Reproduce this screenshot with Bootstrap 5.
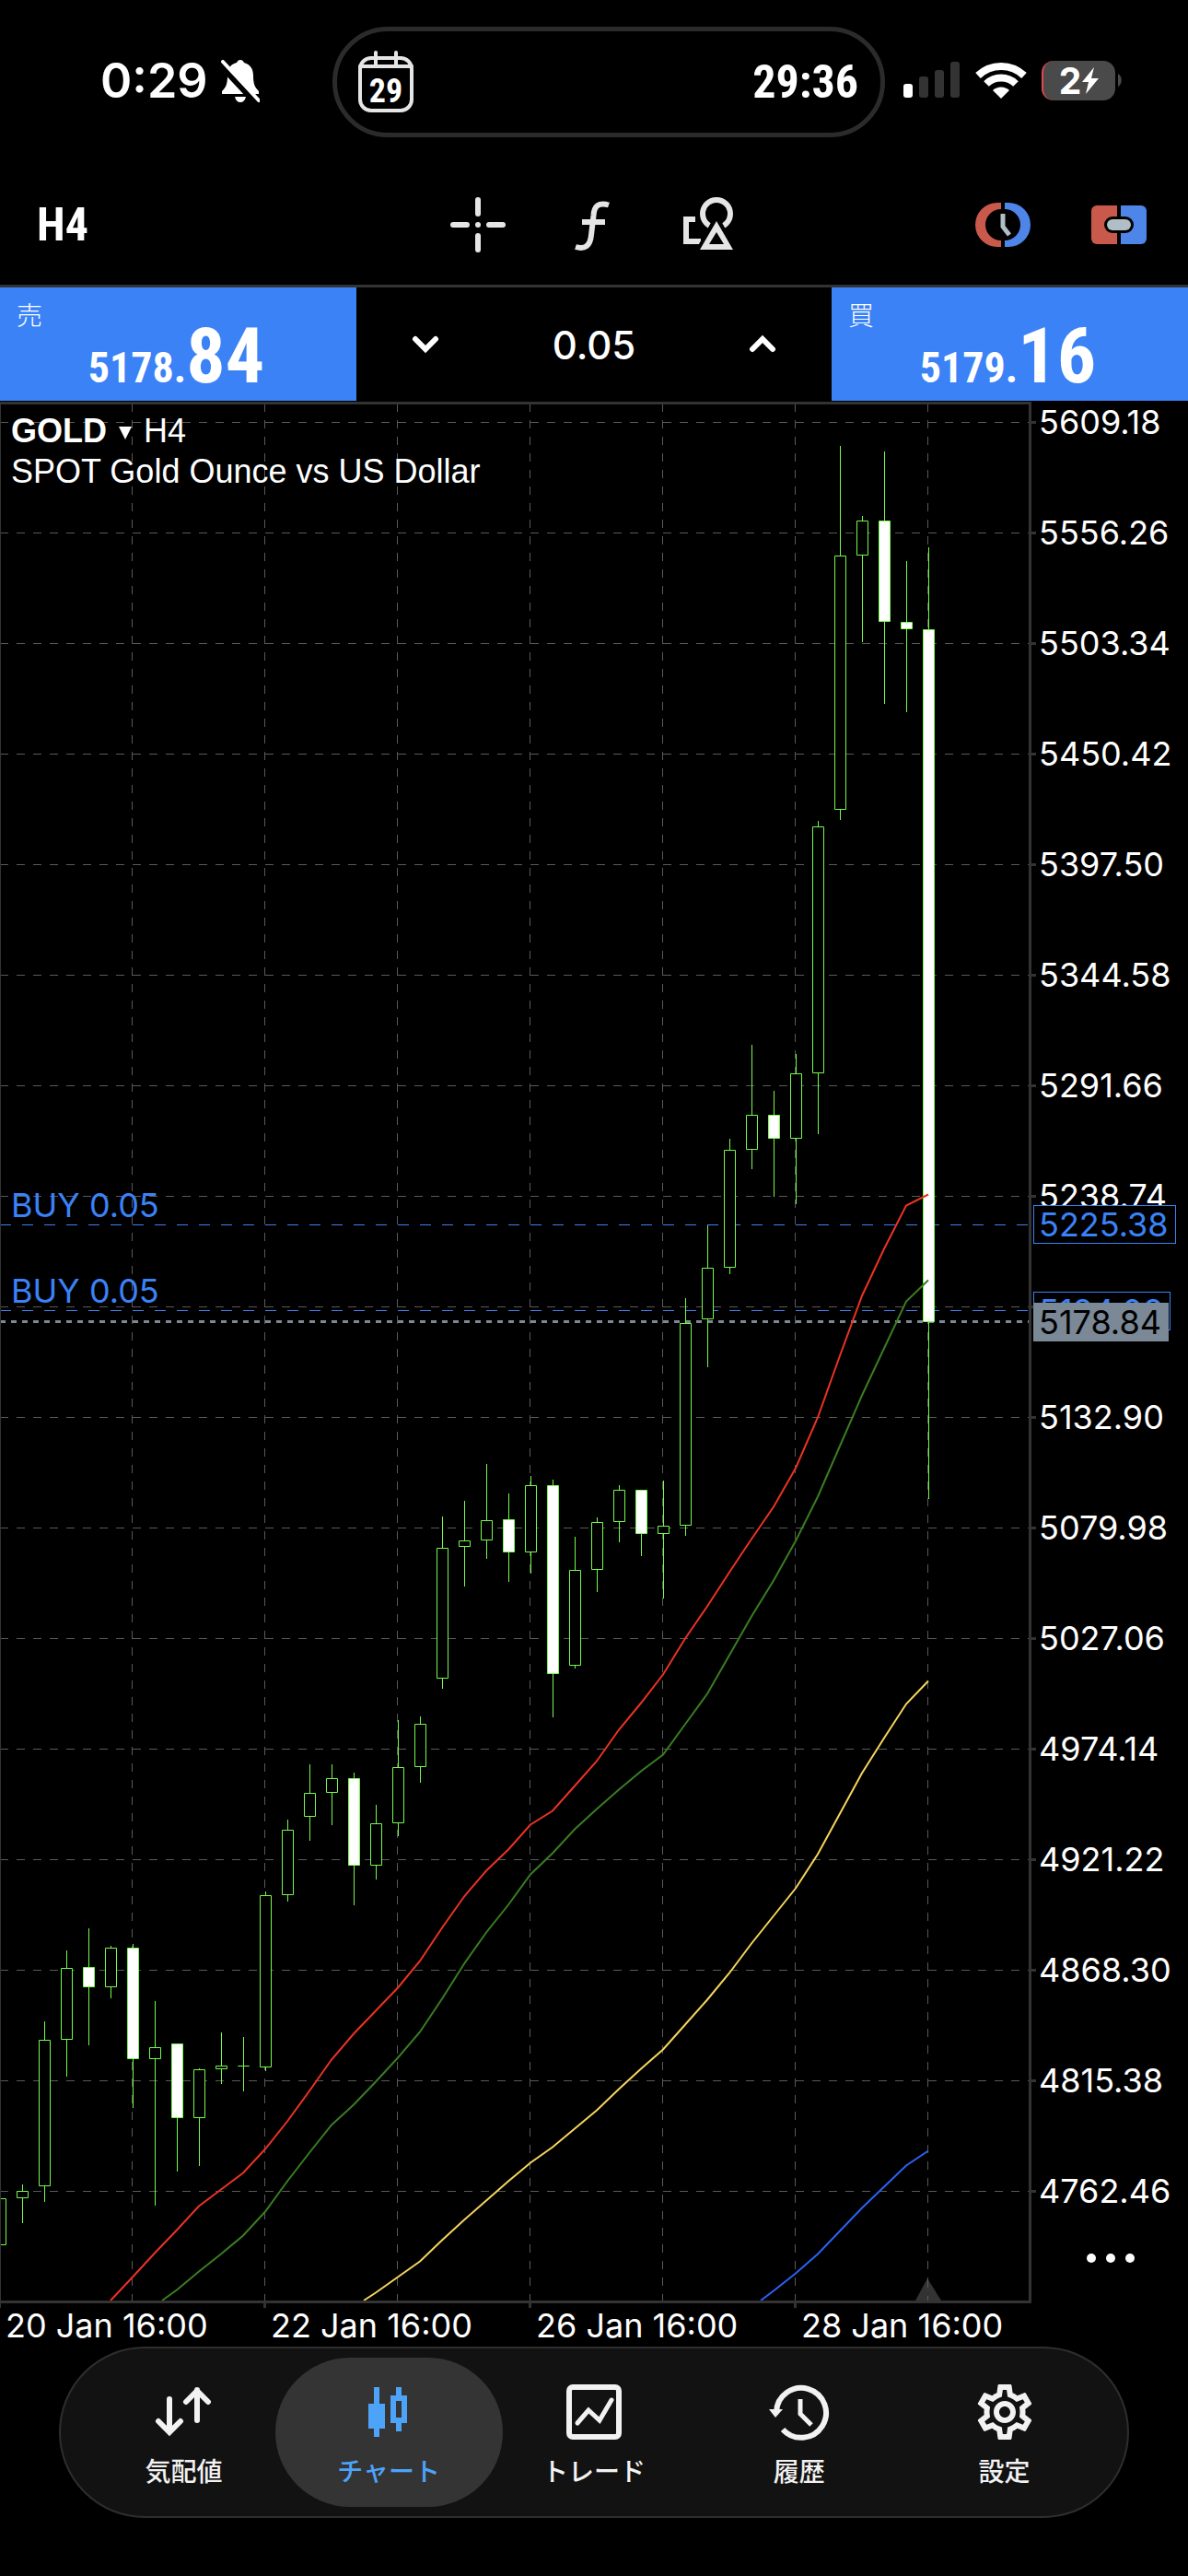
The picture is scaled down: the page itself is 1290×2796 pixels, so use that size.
<!DOCTYPE html>
<html lang="ja">
<head>
<meta charset="utf-8">
<meta name="viewport" content="width=device-width, initial-scale=1">
<title>GOLD H4</title>
<link rel="stylesheet" href="https://cdn.jsdelivr.net/npm/bootstrap@5.3.0/dist/css/bootstrap.min.css">
<style>
  :root { --line: #333; --buy: #3b82f7; --din: "Liberation Sans Narrow", "Roboto Condensed", "Noto Sans CJK JP", sans-serif; }
  body { background: #000; color: #fff; font-family: Inter, "Noto Sans CJK JP", sans-serif; }
  svg { display: block; flex: none; }
  button, .btn { color: inherit; }
  .icon-btn { background: none; border: 0; padding: 0; line-height: 1; }
  .status-bar { height: 178px; padding: 29px 71px 0 109px; }
  .status-time { font-size: 52px; font-weight: 600; line-height: 60px; width: 131px; }
  .island { width: 600px; height: 120px; border: 5px solid #2b2b2b; border-radius: 60px; padding: 0 24px 0 22px; margin-left: 79px; }
  .island-time { font: 700 50px/60px var(--din); }
  .status-left { height: 118px; }
  .status-right { height: 116px; gap: 16px; }
  .battery { width: 80px; height: 43px; border-radius: 13px; background: #4a4a4a; border-left: 2px solid #e5484d; font-size: 39px; font-weight: 700; line-height: 43px; }
  .toolbar-row { height: 134px; padding: 0 44px 0 40px; border-bottom: 3px solid var(--line); }
  .tf { font: 700 50px/60px var(--din); width: 448px; }
  .quote { width: 30%; background: var(--buy); color: #fff; border: 0; height: 123px; padding: 5px 22px 0 18px; text-align: left; }
  .quote-name { font: 300 28px/36px "Noto Sans CJK JP", sans-serif; display: block; }
  .quote-price { display: block; font: 700 46px/60px var(--din); text-align: center; margin-top: -2px; }
  .quote-price b { font-size: 84px; font-weight: 700; }
  .trade-row { height: 124px; }
  .volume { background: none; border: 0; color: #fff; width: 120px; text-align: center; font-size: 42px; font-weight: 500; padding: 0; }
  .plot { min-width: 0; }
  .plot svg { width: 100%; height: 2070px; }
  .axis-text { font-size: 36px; line-height: 40px; white-space: nowrap; }
  .chart-title { position: absolute; left: 12px; top: 10px; font: 36px/44px "Liberation Sans", sans-serif; }
  .tri { width: 0; height: 0; border: 7px solid transparent; border-top: 14px solid #fff; border-bottom: 0; margin: 4px 13px 0; }
  .order-label { position: absolute; left: 12px; color: var(--buy); }
  .axis { width: 164px; padding-top: 2px; }
  .axis-label { height: 40px; margin-bottom: 80px; padding-left: 2px; }
  .tag { position: absolute; left: -4px; height: 42px; padding: 0 7px 0 5px; border: 1px solid var(--buy); background: #000; color: var(--buy); }
  .tag-now { background: #7b8896; border-color: #7b8896; color: #000; }
  .more { position: absolute; right: 57px; bottom: 49px; }
  .dates { margin-top: -2px; padding-left: 6px; height: 43px; }
  .dates span { width: 288px; }
  .tabbar { margin: 0 64px; height: 186px; border: 2px solid #2e2e2e; border-radius: 93px; background: #121212; padding: 0 22px; }
  .tab-item { flex: 1 1 0; margin: 0 -12px; height: 162px; border-radius: 81px; color: #f2f2f2; text-decoration: none; padding-top: 28px; font: 500 28px/40px "Noto Sans CJK JP", sans-serif; gap: 12px; }
  .tab-item.active { background: #343434; color: #4da3f8; }
</style>
</head>
<body>
<header>
  <div class="status-bar d-flex">
    <div class="status-left d-flex align-items-center flex-shrink-0">
      <span class="status-time">0:29</span>
      <svg width="42" height="46" viewBox="0 0 42 46"><path d="M21 0c2 0 3 1 4 3 7 2 10 7 10 14 0 10 2 13 6 17v3H1v-3c4-4 6-7 6-17C7 10 10 5 17 3c1-2 2-3 4-3zM15 40h12c-1 4-3 6-6 6s-5-2-6-6z" fill="#fff"/><path d="M0 5 38 46" stroke="#000" stroke-width="8"/><path d="M2 2 41 44" stroke="#fff" stroke-width="4" stroke-linecap="round"/></svg>
    </div>
    <div class="island d-flex align-items-center justify-content-between flex-shrink-0">
      <svg width="62" height="68" viewBox="0 0 62 68"><g fill="none" stroke="#e5e5e5" stroke-width="4"><rect x="3" y="8" width="56" height="57" rx="12"/><path d="M3 17H59M20 2V16M42 2V16" stroke-linecap="round"/></g><text x="31" y="56" text-anchor="middle" font-family="Liberation Sans Narrow, Roboto Condensed, Noto Sans CJK JP, sans-serif" font-size="36" font-weight="700" fill="#fff">29</text></svg>
      <span class="island-time">29:36</span>
    </div>
    <div class="status-right d-flex align-items-center flex-grow-1 ps-3 ms-1">
      <svg width="62" height="40" viewBox="0 0 62 40"><rect x="0" y="24" width="10" height="15" rx="3" fill="#fff"/><g fill="#333"><rect x="17" y="16" width="10" height="23" rx="3"/><rect x="34" y="9" width="10" height="30" rx="3"/><rect x="51" y="0" width="10" height="39" rx="3"/></g></svg>
      <svg width="56" height="40" viewBox="0 0 56 40"><g fill="none" stroke="#fff" stroke-width="8"><path d="M3 15a36 36 0 0 1 50 0"/><path d="M12 24a23 23 0 0 1 32 0"/></g><path d="M28 40 19 31a13 13 0 0 1 18 0z" fill="#fff"/></svg>
      <div class="d-flex align-items-center">
        <div class="battery d-flex align-items-center justify-content-center">2<svg width="20" height="29" viewBox="0 0 20 29"><path d="M14 0 1 16h7L5 29 19 12h-8z" fill="#fff"/></svg></div>
        <svg width="8" height="14" viewBox="0 0 8 14"><path d="M3 0c5 3 5 11 0 14z" fill="#4a4a4a"/></svg>
      </div>
    </div>
  </div>
  <div class="toolbar-row d-flex align-items-center">
    <button class="icon-btn tf text-start">H4</button>
    <button class="icon-btn" aria-label="crosshair"><svg width="62" height="62" viewBox="488 212 62 62"><path d="M492 243H507M531 243H546M519 216V231M519 255V270" stroke="#e5e5e5" stroke-width="6" stroke-linecap="round"/><circle cx="519" cy="243" r="3" fill="#e5e5e5"/></svg></button>
    <button class="icon-btn ms-5" aria-label="indicators"><svg width="84" height="62" viewBox="599 212 84 62"><path d="M662 221.500C651 218 646 223 645.500 233L643 254C642 266 636 270 626 267M633 240H658" stroke="#e5e5e5" stroke-width="6" fill="none"/></svg></button>
    <button class="icon-btn ms-5" aria-label="objects"><svg width="84" height="62" viewBox="730 212 84 62"><g fill="none" stroke="#e5e5e5" stroke-width="6"><path d="M755 237H745V261H761"/><circle cx="778" cy="231" r="15"/></g><path d="M778 233 755 274H801z" stroke="#000" stroke-width="3"/><path fill-rule="evenodd" d="M778 239 760 270H796zM778 251 770 264H786z" fill="#e5e5e5"/></svg></button>
    <span class="flex-grow-1"></span>
    <button class="icon-btn me-5" aria-label="history order"><svg width="62" height="62" viewBox="1061 212 62 62"><path d="M1090 219H1086A24 24 0 0 0 1086 267H1090V260A17 17 0 0 1 1090 226z" fill="#c9594a"/><path d="M1094 219H1098A24 24 0 0 1 1098 267H1094V260A17 17 0 0 0 1094 226z" fill="#4d86e8"/><path d="M1092 231V245L1099 254" fill="none" stroke="#b0bec5" stroke-width="5"/></svg></button>
    <button class="icon-btn ms-3" aria-label="one click trading"><svg width="62" height="62" viewBox="1184 212 62 62"><path d="M1213 222H1191a6 6 0 0 0-6 6V258a6 6 0 0 0 6 6H1213z" fill="#c9594a"/><path d="M1217 222H1239a6 6 0 0 1 6 6V258a6 6 0 0 1-6 6H1217z" fill="#4d86e8"/><rect x="1199" y="234" width="32" height="18" rx="9"/><rect x="1202" y="237" width="26" height="12" rx="6" fill="#b0bec5"/></svg></button>
  </div>
</header>
<main>
  <div class="trade-row d-flex">
    <button class="quote"><span class="quote-name">売</span><span class="quote-price">5178.<b>84</b></span></button>
    <div class="d-flex flex-grow-1 align-items-center justify-content-between px-5">
      <button class="icon-btn ms-2 ps-1" aria-label="decrease"><svg width="30" height="22" viewBox="0 0 30 22"><path d="M4 5 15 16 26 5" fill="none" stroke="#fff" stroke-width="6" stroke-linecap="round"/></svg></button>
      <input class="volume" value="0.05" aria-label="volume">
      <button class="icon-btn me-2 pe-1" aria-label="increase"><svg width="30" height="22" viewBox="0 0 30 22"><path d="M4 16 15 5 26 16" fill="none" stroke="#fff" stroke-width="6" stroke-linecap="round"/></svg></button>
    </div>
    <button class="quote"><span class="quote-name">買</span><span class="quote-price">5179.<b>16</b></span></button>
  </div>
  <section class="d-flex">
    <div class="plot flex-grow-1 position-relative">
      <svg id="chart" viewBox="0 436 1126 2070" preserveAspectRatio="xMaxYMin slice"></svg>
      <div class="chart-title">
        <div class="d-flex align-items-center"><b>GOLD</b><span class="tri"></span>H4</div>
        <div>SPOT Gold Ounce vs US Dollar</div>
      </div>
      <div class="order-label axis-text" style="top:852px">BUY 0.05</div>
      <div class="order-label axis-text" style="top:945px">BUY 0.05</div>
    </div>
    <div class="axis flex-shrink-0 position-relative axis-text" id="axis">
      <div class="tag" style="top:872px">5225.38</div>
      <div class="tag" style="top:966px">5184.08</div>
      <div class="tag tag-now" style="top:978px">5178.84</div>
      <button class="icon-btn more" aria-label="more"><svg width="54" height="12" viewBox="0 0 54 12"><g fill="#fff"><circle cx="6" cy="6" r="5"/><circle cx="27" cy="6" r="5"/><circle cx="48" cy="6" r="5"/></g></svg></button>
    </div>
  </section>
  <div class="dates d-flex axis-text"><span>20 Jan 16:00</span><span>22 Jan 16:00</span><span>26 Jan 16:00</span><span>28 Jan 16:00</span></div>
</main>
<nav class="tabbar d-flex align-items-center">
  <a href="#" class="tab-item d-flex flex-column align-items-center"><svg width="62" height="62" viewBox="0 0 62 62"><path d="M16 17V52M4 41 16 53 28 41M46 40V7M34 20 46 8 58 20" fill="none" stroke="#f2f2f2" stroke-width="6" stroke-linecap="round"/></svg>気配値</a>
  <a href="#" class="tab-item active d-flex flex-column align-items-center"><svg width="62" height="62" viewBox="391 2588 62 62"><path d="M406 2592h6v18h6v27h-6v9h-6v-9h-6v-27h6zM430 2592h6v9h6v30h-6v9h-6v-9h-6v-30h6zm0 15v18h6v-18z" fill="#4da3f8" fill-rule="evenodd"/></svg>チャート</a>
  <a href="#" class="tab-item d-flex flex-column align-items-center"><svg width="62" height="62" viewBox="0 0 62 62"><g fill="none" stroke="#f2f2f2" stroke-width="6"><rect x="4" y="4" width="54" height="54" rx="4"/><path d="M13 43 25 29 37 40 50 18" stroke-width="5" stroke-linecap="round"/></g></svg>トレード</a>
  <a href="#" class="tab-item d-flex flex-column align-items-center"><svg width="68" height="62" viewBox="-1 0 68 62"><g fill="none" stroke="#f2f2f2" stroke-width="6"><path d="M8 31A27 27 0 1 1 15 50"/><path d="M34 17V33L46 45" stroke-width="5"/></g><path d="M0 28H15L7 37z" fill="#f2f2f2"/></svg>履歴</a>
  <a href="#" class="tab-item d-flex flex-column align-items-center"><svg width="62" height="62" viewBox="1.670 1.670 20.660 20.660"><path fill="#f2f2f2" d="M19.430 12.980c.04-.32.07-.64.07-.98 0-.34-.03-.66-.07-.98l2.110-1.650c.19-.15.24-.42.12-.64l-2-3.460c-.09-.16-.26-.25-.44-.25-.06 0-.12.01-.17.03l-2.490 1c-.52-.4-1.080-.73-1.690-.98l-.38-2.650C14.460 2.180 14.250 2 14 2h-4c-.25 0-.46.18-.49.42l-.38 2.650c-.61.25-1.170.59-1.690.98l-2.490-1c-.06-.02-.12-.03-.18-.03-.17 0-.34.09-.43.25l-2 3.460c-.13.22-.07.49.12.64l2.110 1.650c-.04.32-.07.65-.07.98 0 .33.03.66.07.98l-2.110 1.650c-.19.15-.24.42-.12.64l2 3.460c.09.16.26.25.44.25.06 0 .12-.01.17-.03l2.490-1c.52.4 1.080.73 1.690.98l.38 2.650c.03.24.24.42.49.42h4c.25 0 .46-.18.49-.42l.38-2.650c.61-.25 1.170-.59 1.690-.98l2.490 1c.06.02.12.03.18.03.17 0 .34-.09.43-.25l2-3.460c.12-.22.07-.49-.12-.64l-2.110-1.650zm-1.980-1.710c.04.31.05.52.05.73 0 .21-.02.43-.05.73l-.14 1.130.89.7 1.080.84-.7 1.210-1.270-.51-1.040-.42-.9.68c-.43.32-.84.56-1.250.73l-1.060.43-.16 1.130-.2 1.350h-1.400l-.19-1.350-.16-1.130-1.060-.43c-.43-.18-.83-.41-1.230-.71l-.91-.7-1.060.43-1.270.51-.7-1.210 1.080-.84.89-.7-.14-1.130c-.03-.31-.05-.54-.05-.74s.02-.43.05-.73l.14-1.130-.89-.7-1.080-.84.7-1.210 1.270.51 1.040.42.9-.68c.43-.32.84-.56 1.250-.73l1.060-.43.16-1.130.2-1.350h1.390l.19 1.350.16 1.130 1.060.43c.43.18.83.41 1.230.71l.91.7 1.060-.43 1.270-.51.7 1.210-1.070.85-.89.7.14 1.130zM12 8c-2.210 0-4 1.790-4 4s1.790 4 4 4 4-1.790 4-4-1.790-4-4-4zm0 6c-1.100 0-2-.9-2-2s.9-2 2-2 2 .9 2 2-.9 2-2 2z"/></svg>設定</a>
</nav>
<script src="https://cdn.jsdelivr.net/npm/bootstrap@5.3.0/dist/js/bootstrap.bundle.min.js"></script>
<script>
// high, body top, body bottom, low, 1 = bearish
const candles = [
[2386,2386,2436,2436],[2371,2378,2385,2413],[2194,2214,2372,2390],[2117,2136,2213,2254],[2093,2135,2156,2220,1],
[2112,2114,2156,2169],[2110,2114,2234,2288,1],[2172,2222,2234,2394],[2218,2218,2298,2357,1],[2245,2246,2298,2351],
[2206,2242,2245,2262],[2211,2242,2242,2270],[2053,2057,2243,2248],[1975,1986,2056,2064],[1915,1946,1971,1998],
[1915,1930,1945,1981],[1924,1930,2024,2068,1],[1959,1979,2024,2040],[1867,1918,1978,1993],[1863,1871,1917,1935],
[1646,1680,1821,1833],[1629,1672,1678,1722],[1589,1650,1671,1692],[1621,1649,1684,1717,1],[1602,1612,1684,1708],
[1606,1612,1816,1864,1],[1668,1704,1807,1811],[1647,1652,1703,1728],[1612,1617,1651,1674],[1617,1617,1664,1689,1],
[1607,1656,1664,1735],[1409,1436,1655,1667],[1330,1376,1431,1484],[1236,1248,1375,1383],[1134,1210,1247,1269],
[1184,1210,1235,1299,1],[1144,1165,1235,1307],[891,897,1164,1231],[484,603,878,890],[560,565,602,697],
[490,565,674,764,1],[609,675,682,773,1],[594,683,1434,1627,1]];
// moving averages: starting point at the bottom edge, then one value per bar
const averages = [
['#eb3323',[120,2497],6,[2471,2445,2420,2394,2376,2358,2332,2302,2269,2235,2207,2182,2157,2128,2092,2058,2030,2007,1980,1965,1938,1911,1877,1848,1817,1778,1743,1706,1670,1635,1593,1538,1471,1406,1355,1308,1296]],
['#3a7d22',[176,2497],8,[2485,2465,2446,2426,2400,2367,2336,2306,2284,2259,2233,2205,2169,2131,2097,2067,2034,2011,1985,1963,1942,1922,1904,1871,1838,1796,1754,1715,1672,1624,1569,1514,1463,1412,1389]],
['#f6d55c',[395,2497],17,[2488,2471,2454,2431,2409,2388,2367,2347,2330,2310,2290,2267,2245,2224,2197,2170,2141,2109,2079,2049,2012,1968,1924,1886,1849,1824]],
['#2b62f6',[826,2497],35,[2486,2467,2446,2421,2396,2373,2350,2334]]];
let s = '<g stroke="#5a5a5a" stroke-dasharray="9 9">';
for (let y = 458.5; y < 2480; y += 120) s += `<path d="M0 ${y}H1117"/>`;
for (let x = 143.5; x < 1100; x += 144) s += `<path d="M${x} 438V2497"/>`;
s += '</g><path d="M994 2497 1007 2473 1022 2497z" fill="#333"/><path d="M1007.5 2474V2497" stroke="#5a5a5a" stroke-dasharray="9 9"/>';
s += '<path d="M0 1329.5H1117M0 1422.5H1117" stroke="#3b82f7" stroke-dasharray="12 12"/><path d="M0 1434.5H1117" stroke="#7b8896" stroke-width="3" stroke-dasharray="6 6"/>';
s += '<g stroke="#75fb4c">';
candles.forEach(([h, t, b, l, down], i) => {
  const c = 24 * i + 0.5;
  s += `<path d="M${c} ${h}V${l}"/><path d="M${c - 6} ${t + 0.5}h12V${b + 0.5}h-12z" fill="${down ? '#fff' : '#000'}"/>`;
});
s += '</g><g fill="none" stroke-width="2">';
averages.forEach(([color, start, first, ys]) => {
  s += `<polyline stroke="${color}" points="${start} ${ys.map((y, i) => [24 * (first + i), y + 0.5]).join(' ')}"/>`;
});
s += '</g><g stroke="#333" stroke-width="3"><path d="M0 437.5H1118.5V2498.5H0M287.500 2500V2505M575.500 2500V2505M863.500 2500V2505" fill="none"/>';
for (let y = 458.5; y < 2480; y += 120) s += `<path d="M1120 ${y}H1125"/>`;
s += '</g><path d="M0.5 437V2505" stroke="#333"/>';
document.getElementById('chart').innerHTML = s;
let labels = '';
for (let i = 0; i < 17; i++) labels += `<div class="axis-label">${i === 8 ? '' : (5609.18 - 52.92 * i).toFixed(2)}</div>`;
// the last label keeps no trailing gap so the axis fits the plot height
document.getElementById('axis').insertAdjacentHTML('afterbegin', labels.replace(/axis-label(?!.*axis-label)/, 'axis-label mb-0'));
</script>
</body>
</html>
